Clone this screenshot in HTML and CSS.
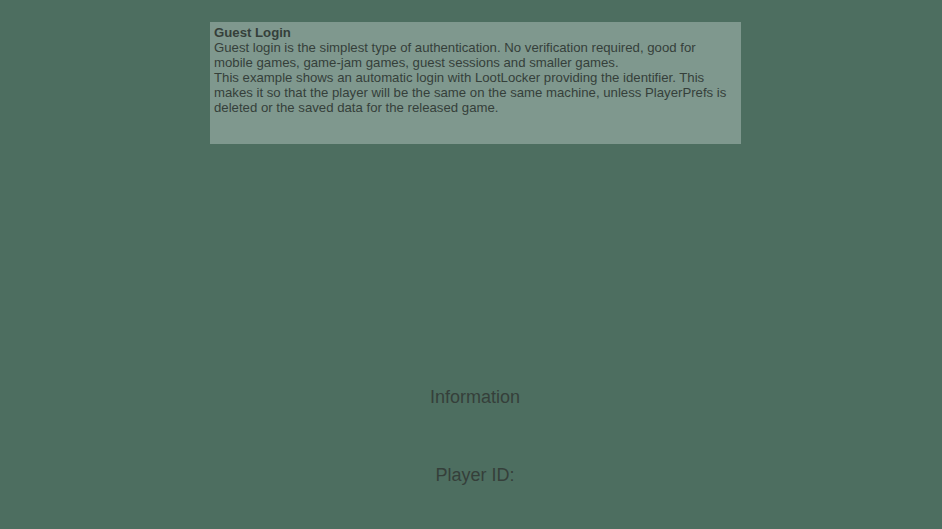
FILE: index.html
```html
<!DOCTYPE html>
<html>
<head>
<meta charset="utf-8">
<link rel="stylesheet" href="styles.css">
</head>
<body>
<div class="screen">
  <div class="panel">
    <div class="title">Guest Login</div>
    <div class="line">Guest login is the simplest type of authentication. No verification required, good for</div>
    <div class="line">mobile games, game-jam games, guest sessions and smaller games.</div>
    <div class="line">This example shows an automatic login with LootLocker providing the identifier. This</div>
    <div class="line">makes it so that the player will be the same on the same machine, unless PlayerPrefs is</div>
    <div class="line">deleted or the saved data for the released game.</div>
  </div>
  <div class="info">Information</div>
  <div class="player">Player ID:</div>
</div>
</body>
</html>
```
FILE: styles.css
```css
html, body {
  margin: 0;
  padding: 0;
  background: #4d6e60;
}
.screen {
  width: 942px;
  height: 529px;
  display: flex;
  flex-direction: column;
  align-items: center;
  font-family: "Liberation Sans", Arial, sans-serif;
  color: #353f3a;
}
.panel {
  margin-top: 22px;
  margin-left: 9px;
  width: 531px;
  height: 122px;
  box-sizing: border-box;
  padding: 3px 4px;
  background: #7f988e;
  font-size: 13.2px;
  line-height: 15px;
}
.title {
  font-weight: bold;
}
.line {
  white-space: nowrap;
}
.info {
  margin-top: 243px;
  font-size: 18px;
  line-height: 20px;
  margin-left: 8px;
}
.player {
  margin-top: 58px;
  font-size: 18px;
  line-height: 20px;
  margin-left: 8px;
}
```
